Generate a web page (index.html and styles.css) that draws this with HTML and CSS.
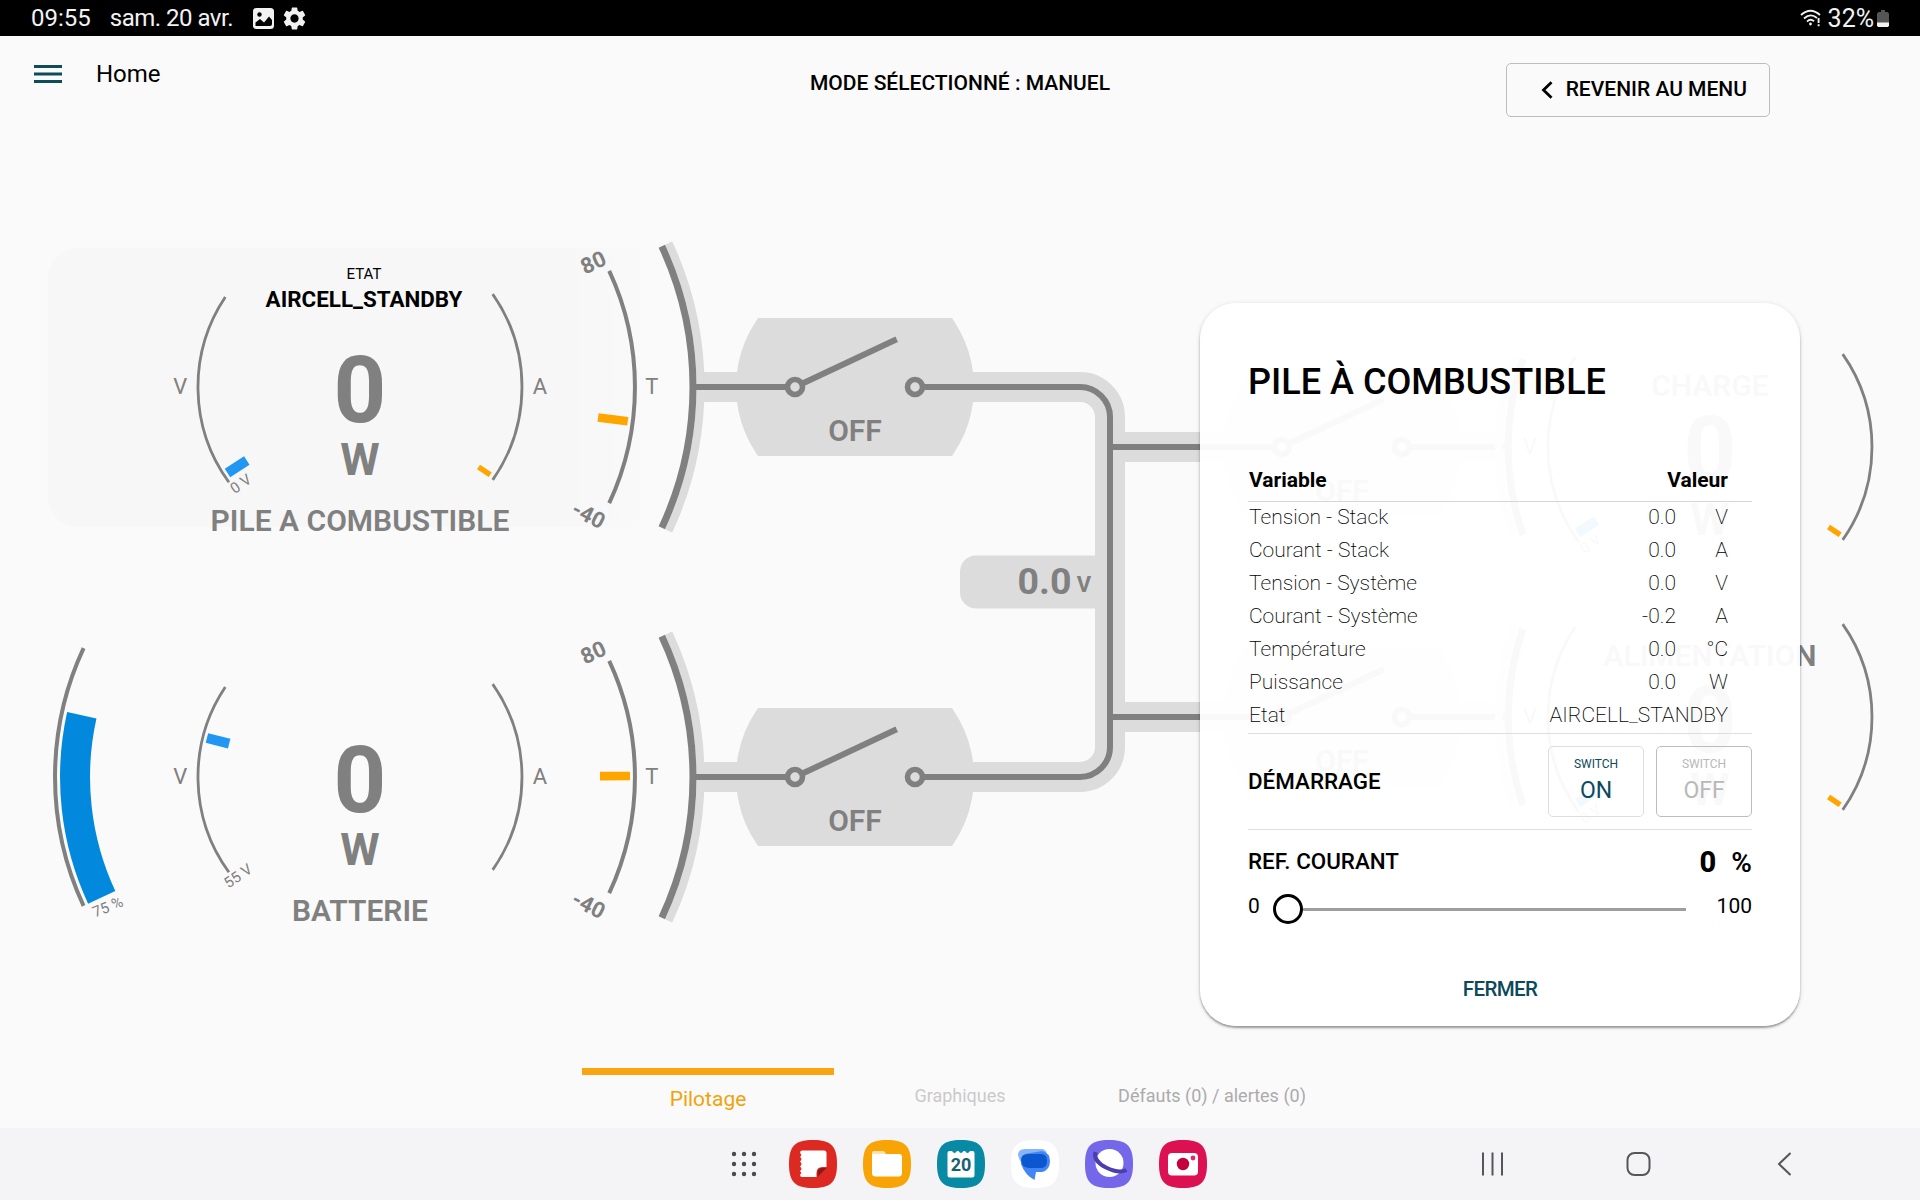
FILE: index.html
```html
<!DOCTYPE html>
<html lang="fr">
<head>
<meta charset="utf-8">
<title>Pilotage</title>
<link rel="stylesheet" href="styles.css">
</head>
<body>
<div class="status">
  <span class="clock">09:55</span>
  <span class="date">sam. 20 avr.</span>
  <svg class="status-img" width="21" height="21" viewBox="0 0 21 21"><rect width="21" height="21" rx="3.5" fill="#f2f2f2"/><circle cx="6.5" cy="6.5" r="2.2" fill="#000"/><path d="M2.500 18v-3.500L7 11l4 3.500 5-6 3 3.500v4q0 2-2 2z" fill="#000"/></svg>
  <svg class="status-gear" width="23" height="23" viewBox="2 2 20 20"><path fill="#f2f2f2" d="M19.14 12.94c.04-.3.06-.61.06-.94 0-.32-.02-.64-.07-.94l2.03-1.58a.49.49 0 0 0 .12-.61l-1.92-3.32a.488.488 0 0 0-.59-.22l-2.39.96c-.5-.38-1.03-.7-1.62-.94l-.36-2.54a.484.484 0 0 0-.48-.41h-3.84c-.24 0-.43.17-.47.41l-.36 2.54c-.59.24-1.13.57-1.62.94l-2.39-.96c-.22-.08-.47 0-.59.22L2.74 8.87c-.12.21-.08.47.12.61l2.03 1.58c-.05.3-.09.63-.09.94s.02.64.07.94l-2.03 1.58a.49.49 0 0 0-.12.61l1.92 3.32c.12.22.37.29.59.22l2.39-.96c.5.38 1.03.7 1.62.94l.36 2.54c.05.24.24.41.48.41h3.84c.24 0 .44-.17.47-.41l.36-2.54c.59-.24 1.13-.56 1.62-.94l2.39.96c.22.08.47 0 .59-.22l1.92-3.32c.12-.22.07-.47-.12-.61zM12 15.6c-1.98 0-3.6-1.62-3.6-3.6s1.62-3.6 3.6-3.6 3.6 1.62 3.6 3.6-1.62 3.6-3.6 3.6"/></svg>
  <span class="spacer"></span>
  <svg class="wifi" width="22" height="18" viewBox="0 0 22 18" fill="none" stroke="#f2f2f2" stroke-width="1.9"><path d="M1 6Q10.500-2.500 20 6M4 9.500Q10.500 3.500 17 9M7 12.600Q10.500 9.300 14 12.200"/><circle cx="10.500" cy="15" r="1.400" fill="#f2f2f2" stroke="none"/><path d="M18.600 9v5M18.600 15.300v2"/></svg>
  <span class="percent">32%</span>
  <svg class="battery" width="12" height="17" viewBox="0 0 12 17"><path d="M4 0h4v2h2.500L12 3.500V13H0V3.500L1.500 2H4z" fill="#555"/><path d="M0 12.500h12V15.500L11 17H1L0 15.500z" fill="#f2f2f2"/></svg>
</div>

<header class="topbar">
  <div class="topbar-left">
    <svg width="28" height="18" viewBox="0 0 28 18" fill="#0f4c58"><path d="M0 0h28v3H0zM0 7.500h28v3H0zM0 15h28v3H0z"/></svg>
    <span class="title">Home</span>
  </div>
  <div class="mode">MODE SÉLECTIONNÉ : MANUEL</div>
  <button class="back"><svg width="12" height="18" viewBox="0 0 12 18" fill="none" stroke="#000" stroke-width="2.800"><path d="M10.500 1.200 2.500 9l8 7.800"/></svg>REVENIR AU MENU</button>
</header>

<main class="board">
  <svg class="diagram" width="1920" height="910" viewBox="0 140 1920 910">
    <defs>
      <linearGradient id="hover-fade"><stop offset="0" stop-color="#f7f7f7"/><stop offset=".8" stop-color="#f7f7f7"/><stop offset="1" stop-color="#fafafa"/></linearGradient>
      <clipPath id="switch-clip"><rect x="-125" y="-69" width="250" height="138"/></clipPath>
      <g id="contactor">
        <circle r="119" class="soft-fill" clip-path="url(#switch-clip)"/>
        <path d="M-60 0 41.700-47.700" class="wire"/>
        <circle cx="-60" r="7.500" class="node"/><circle cx="60" r="7.500" class="node"/>
        <text y="53.500" class="t30">OFF</text>
      </g>
      <g id="dial">
        <path d="M-134.700-90A162 162 0 0 0-131.100 95.200M132.700-92.900A162 162 0 0 1 132.700 92.900" class="arc"/>
        <text y="34.500" class="t92">0</text>
        <text y="88" class="t45">W</text>
      </g>
      <g id="temp">
        <path d="M308.600-143.900A340.500 340.500 0 0 1 308.600 143.900" class="rim-soft"/>
        <path d="M301.800-140.700A333 333 0 0 1 301.800 140.700" class="rim"/>
        <path d="M249.200-116.200A275 275 0 0 1 249.200 116.200" class="arc-t"/>
        <text class="t22b" transform="translate(233.300-124.500) rotate(-25)" y="7.500">80</text>
        <text class="t22b" transform="translate(228.500 128) rotate(27)" y="7.500">-40</text>
        <text class="t22" x="-179.700" y="6.500">V</text>
        <text class="t22" x="180" y="6.500">A</text>
        <text class="t22" x="291.700" y="6.500">T</text>
      </g>
      <g id="load">
        <path d="M-189-89.500A270 270 0 0 0-189 89.500" class="rim-soft" transform="translate(-7 0)"/>
        <path d="M-187-88A270 270 0 0 0-187 88" class="rim"/>
        <text class="t22" x="-180" y="6.500">V</text>
        <rect x="-158" y="-5" width="23" height="10" class="blue" transform="rotate(-33)"/>
        <rect x="143" y="-2.700" width="14" height="5.400" class="orange" transform="rotate(34)"/>
        <text class="t15" transform="translate(-119.500 97) rotate(-35)" y="5">0 V</text>
      </g>
    </defs>

    <rect x="48" y="248" width="632" height="279" rx="30" fill="url(#hover-fade)"/>

    <!-- bus bars -->
    <path d="M700 387H1080A30 30 0 0 1 1110 417V747A30 30 0 0 1 1080 777H700M1110 447H1512M1110 717H1512" class="duct"/>
    <path d="M1097 555.500H976a16 16 0 0 0-16 16v21a16 16 0 0 0 16 16h121z" class="soft-fill"/>
    <use href="#temp" x="360" y="387"/><use href="#temp" x="360" y="777"/>
    <use href="#contactor" x="855" y="387"/><use href="#contactor" x="855" y="777"/>
    <use href="#contactor" x="1342" y="447"/><use href="#contactor" x="1342" y="717"/>
    <path d="M693 387H786M924 387H1080A30 30 0 0 1 1110 417V747A30 30 0 0 1 1080 777H924M693 777H786M1110 447H1273M1411 447H1509M1110 717H1273M1411 717H1509" class="wire"/>
    <text x="1071.500" y="593.500" class="t36">0.0</text>
    <text x="1091" y="591.500" class="t22v">V</text>

    <!-- fuel cell -->
    <g transform="translate(360 387)">
      <use href="#dial"/>
      <rect x="-158" y="-5" width="23" height="10" class="blue" transform="rotate(-33)"/>
      <rect x="143" y="-2.700" width="14" height="5.400" class="orange" transform="rotate(34)"/>
      <rect x="240" y="-4.300" width="30" height="8.600" class="orange" transform="rotate(7.300)"/>
      <text class="t15" transform="translate(-119.300 97) rotate(-35)" y="5">0 V</text>
      <text class="state-label" x="4" y="-108">ETAT</text>
      <text class="state" x="4" y="-80">AIRCELL_STANDBY</text>
      <text class="t30" y="144">PILE A COMBUSTIBLE</text>
    </g>

    <!-- battery -->
    <g transform="translate(360 777)">
      <use href="#dial"/>
      <path d="M-276.400-128.900A305 305 0 0 0-276.400 128.900" class="arc-t"/>
      <path d="M-278.200-61.700A285 285 0 0 0-258.300 120.400" class="charge"/>
      <rect x="-158" y="-5" width="23" height="10" class="blue" transform="rotate(14.300)"/>
      <rect x="240" y="-4.300" width="30" height="8.600" class="orange" transform="rotate(-.2)"/>
      <text class="t15" transform="translate(-122 99) rotate(-35)" y="5">55 V</text>
      <text class="t15" transform="translate(-252.300 130) rotate(-22)" y="5">75 %</text>
      <text class="t30" y="144">BATTERIE</text>
    </g>

    <!-- loads -->
    <g transform="translate(1710 447)"><use href="#dial"/><use href="#load"/><text class="t30" y="-51">CHARGE</text></g>
    <g transform="translate(1710 717)"><use href="#dial"/><use href="#load"/><text class="t30" y="-51">ALIMENTATION</text></g>
  </svg>

  <section class="dialog">
    <h1>PILE À COMBUSTIBLE</h1>
    <div class="row head"><span>Variable</span><span class="num">Valeur</span></div>
    <div class="rows">
      <div class="row"><span>Tension - Stack</span><span class="num">0.0</span><span class="unit">V</span></div>
      <div class="row"><span>Courant - Stack</span><span class="num">0.0</span><span class="unit">A</span></div>
      <div class="row"><span>Tension - Système</span><span class="num">0.0</span><span class="unit">V</span></div>
      <div class="row"><span>Courant - Système</span><span class="num">-0.2</span><span class="unit">A</span></div>
      <div class="row"><span>Température</span><span class="num">0.0</span><span class="unit">°C</span></div>
      <div class="row"><span>Puissance</span><span class="num">0.0</span><span class="unit">W</span></div>
      <div class="row"><span>Etat</span><span class="num">AIRCELL_STANDBY</span></div>
    </div>
    <div class="start">
      <span class="label">DÉMARRAGE</span>
      <button class="toggle on"><small>SWITCH</small>ON</button>
      <button class="toggle off"><small>SWITCH</small>OFF</button>
    </div>
    <div class="ref"><span class="label">REF. COURANT</span><b>0</b><span class="pct">%</span></div>
    <div class="slider"><span>0</span><div class="thumb"></div><div class="track"></div><span class="max">100</span></div>
    <button class="close">FERMER</button>
  </section>
</main>

<nav class="tabs">
  <a class="tab active">Pilotage</a>
  <a class="tab faint">Graphiques</a>
  <a class="tab">Défauts (0) / alertes (0)</a>
</nav>

<footer class="dock">
  <div class="apps">
    <svg width="26" height="26" viewBox="0 0 26 26" fill="#4a4a4e"><g id="dots"><circle cx="3" cy="3" r="2.200"/><circle cx="13" cy="3" r="2.200"/><circle cx="23" cy="3" r="2.200"/></g><use href="#dots" y="10"/><use href="#dots" y="20"/></svg>
    <svg width="48" height="48" viewBox="0 0 48 48"><path class="red" d="M24 0C42 0 48 6 48 24S42 48 24 48 0 42 0 24 6 0 24 0z"/><path fill="#fff" d="M13 10.500h22q2.500 0 2.500 2.500v14h-4q-6 0-6 6v4H13q-2 0-2-2.500 2.500-1 0-3.500 3-2 0-4.500 3-2.500 0-5 3-2.500 0-4.500 2.500-2 0-4 0-2.500 2-2.500z"/><path d="M28.500 37v-4q0-5 5-5h4z" fill="#8e1717"/></svg>
    <svg width="48" height="48" viewBox="0 0 48 48"><path class="amber" d="M24 0C42 0 48 6 48 24S42 48 24 48 0 42 0 24 6 0 24 0z"/><path fill="#fde3a8" d="M9 16v-3q0-2 2-2h9q2 0 3 3h5v6H9z"/><path fill="#fff" d="M9 14h27q3 0 3 3v16q0 3.500-3.500 3.500h-23Q9 36.500 9 33z"/></svg>
    <svg width="48" height="48" viewBox="0 0 48 48"><path class="teal" d="M24 0C42 0 48 6 48 24S42 48 24 48 0 42 0 24 6 0 24 0z"/><path fill="#fff" d="M12.500 11H15q2.500 4 5 0h1.500q2.500 4 5 0H28q2.500 4 5 0h2.500q2 0 2 2v22q0 2.500-2.500 2.500H13q-2.500 0-2.500-2.500V13q0-2 2-2z"/><text x="24" y="30.500" class="day">20</text></svg>
    <svg width="48" height="48" viewBox="0 0 48 48"><path fill="#fff" d="M24 0C42 0 48 6 48 24S42 48 24 48 0 42 0 24 6 0 24 0z"/><path fill="#8ab4f8" d="M14 9h16q5 0 6 5l-20 14q-7-4-9-13 0-6 7-6z"/><path fill="#4285f4" d="M31 11q8 2 8 10 0 9-8 11h-6l-1.500 8Q14 35 10 24L14 14z"/><path fill="#0b57d0" d="M17 14h13q6 0 6 7t-6 7H18q-8-1-8-8 0-6 7-6z"/></svg>
    <svg width="48" height="48" viewBox="0 0 48 48"><path class="violet" d="M24 0C42 0 48 6 48 24S42 48 24 48 0 42 0 24 6 0 24 0z"/><circle cx="24.500" cy="23" r="14" fill="#fff"/><path d="M10.500 12Q8 21 21 27.500T41.500 30" fill="none" stroke="#4b3fae" stroke-width="4"/></svg>
    <svg width="48" height="48" viewBox="0 0 48 48"><path class="pink" d="M24 0C42 0 48 6 48 24S42 48 24 48 0 42 0 24 6 0 24 0z"/><rect x="9" y="13" width="30" height="22.500" rx="4" fill="#fff"/><circle cx="24" cy="24" r="6.200" fill="#c4003f"/><circle cx="34" cy="18" r="2.400" fill="#e8265f"/></svg>
  </div>
  <svg class="keys" width="310" height="26" viewBox="0 0 310 26" fill="none" stroke="#55565a" stroke-width="2"><path d="M2 1.500v23M11.500 1.500v23M21 1.500v23"/><rect x="146.500" y="2" width="22" height="22" rx="7"/><path d="M309.500 2 298 13l11.500 11" /></svg>
</footer>
</body>
</html>
```
FILE: styles.css
```css
* { box-sizing: border-box; }
body {
  margin: 0;
  width: 1920px;
  height: 1200px;
  display: flex;
  flex-direction: column;
  background: #fafafa;
  color: #000;
  font-family: Roboto, "Liberation Sans", sans-serif;
  overflow: hidden;
}
button { background: none; border: 0; padding: 0; margin: 0; font: inherit; color: inherit; }

/* system status bar */
.status {
  height: 36px;
  background: #000;
  color: #f2f2f2;
  display: flex;
  align-items: center;
  padding: 0 31px 0 31px;
  font-size: 24px;
}
.date { margin-left: 19px; letter-spacing: -.5px; }
.status-img { margin-left: 20px; }
.status-gear { margin-left: 9px; }
.spacer { flex: 1; }
.percent { margin: 0 3px 0 6px; font-size: 25px; }

/* page header */
.topbar {
  height: 104px;
  display: grid;
  grid-template-columns: 1fr auto 1fr;
  align-items: start;
  padding: 0 150px 0 34px;
}
.topbar-left { display: flex; align-items: center; gap: 34px; padding-top: 24px; font-size: 24px; line-height: 28px; }
.topbar-left svg { margin-top: -1px; }
.mode { font-size: 21px; font-weight: 500; line-height: 24px; padding-top: 35px; margin-left: 116px; }
.back {
  justify-self: end;
  margin-top: 27px;
  width: 264px;
  height: 54px;
  border: 1px solid #bdbdbd;
  border-radius: 5px;
  display: flex;
  align-items: center;
  justify-content: flex-end;
  gap: 13px;
  padding: 0 22px 2px 0;
  font-size: 21px;
  font-weight: 500;
}
.back svg { margin-top: 1px; }

/* synoptic */
.board { position: relative; height: 910px; flex: none; }
.diagram { display: block; }
.diagram text { fill: #808080; text-anchor: middle; }
.soft-fill { fill: #dcdcdc; }
.duct { fill: none; stroke: #dcdcdc; stroke-width: 30; }
.wire { fill: none; stroke: #808080; stroke-width: 6; }
.node { fill: #dcdcdc; stroke: #808080; stroke-width: 5.6; }
.arc { fill: none; stroke: #808080; stroke-width: 2.8; }
.arc-t { fill: none; stroke: #808080; stroke-width: 4; }
.rim { fill: none; stroke: #808080; stroke-width: 7; }
.rim-soft { fill: none; stroke: #dcdcdc; stroke-width: 8; }
.blue { fill: #2196f3; }
.orange { fill: #ffa500; }
.charge { fill: none; stroke: #0288dd; stroke-width: 30; }
.t92 { font-size: 92px; font-weight: 700; }
.t45 { font-size: 45px; font-weight: 700; }
.t36 { font-size: 37.5px; font-weight: 700; }
.diagram .t36, .diagram .t22v { text-anchor: end; }
.t30 { font-size: 30px; font-weight: 600; }
.t22 { font-size: 22px; }
.t22b { font-size: 22px; font-weight: 700; }
.t22v { font-size: 22px; font-weight: 700; }
.t15 { font-size: 15px; }
.diagram .state-label { font-size: 15px; fill: #000; }
.diagram .state { font-size: 22.4px; font-weight: 700; fill: #000; }

/* detail dialog */
.dialog {
  position: absolute;
  left: 1200px;
  top: 163px;
  width: 600px;
  height: 723px;
  border-radius: 36px;
  background: rgba(255, 255, 255, .95);
  box-shadow: 0 2px 2px rgba(0, 0, 0, .32), 0 1px 5px rgba(0, 0, 0, .14);
  padding: 55px 48px 0;
  display: flex;
  flex-direction: column;
  font-size: 21px;
}
.dialog h1 { margin: 0; font-size: 36.1px; font-weight: 500; line-height: 48px; }
.row { display: flex; padding: 0 24px 0 1px; height: 33px; line-height: 31px; font-weight: 200; }
.row .num { margin-left: auto; }
.row .unit { width: 52px; text-align: right; }
.row.head { margin-top: 57px; height: 39px; line-height: 34px; font-weight: 700; border-bottom: 1px solid #d6d6d6; }
.rows { height: 232px; border-bottom: 1px solid #dedede; }
.start { display: flex; align-items: center; height: 96px; border-bottom: 1px solid #dedede; gap: 12px; }
.label { margin-right: auto; font-size: 22.4px; font-weight: 500; position: relative; top: -1px; }
.toggle {
  width: 96px;
  height: 71px;
  border: 1px solid #dedede;
  border-radius: 5px;
  display: flex;
  flex-direction: column;
  align-items: center;
  justify-content: center;
  font-size: 23px;
  line-height: 27px;
  padding-bottom: 3px;
  gap: 6px;
}
.toggle small { font-size: 12px; line-height: 14px; }
.on { color: #0b4a5c; }
.off { color: #b8b8b8; border-color: #bdbdbd; }
.ref { display: flex; align-items: baseline; padding-top: 15px; height: 63px; }
.ref .label { top: -3px; }
.ref b { font-size: 29px; font-weight: 800; }
.pct { font-size: 28px; font-weight: 600; margin-left: 15px; }
.slider { display: flex; align-items: center; height: 32px; font-size: 21px; }
.slider span { margin-top: -7px; }
.slider .max { margin-left: auto; }
.thumb { width: 30px; height: 30px; border: 3px solid #000; border-radius: 50%; background: #fff; margin-left: 13px; }
.track { width: 383px; height: 3px; background: #9e9e9e; }
.close { margin-top: 52px; font-size: 20.500px; letter-spacing: -.6px; font-weight: 500; line-height: 24px; color: #0b4a5c; align-self: center; }

/* bottom tabs */
.tabs { height: 78px; display: flex; justify-content: center; padding-top: 18px; }
.tab { width: 252px; text-align: center; font-size: 18px; line-height: 22px; padding-top: 17px; color: #ababab; white-space: nowrap; }
.tab.faint { color: #cacaca; }
.tab.active { border-top: 7px solid #f9a50f; padding-top: 13px; font-size: 21px; color: #f0a30c; }

/* system dock */
.dock { height: 72px; background: #f4f4f7; display: flex; align-items: center; padding-left: 731px; }
.apps { display: flex; align-items: center; gap: 26px; }
.apps svg:first-child { margin-right: 6px; }
.keys { margin-left: 274px; }
.red { fill: #dc2a22; }
.amber { fill: #f9a406; }
.teal { fill: #088aa4; }
.violet { fill: #7567ea; }
.pink { fill: #dc1152; }
.day { font-size: 18px; font-weight: 700; fill: #17616f; text-anchor: middle; }
```
